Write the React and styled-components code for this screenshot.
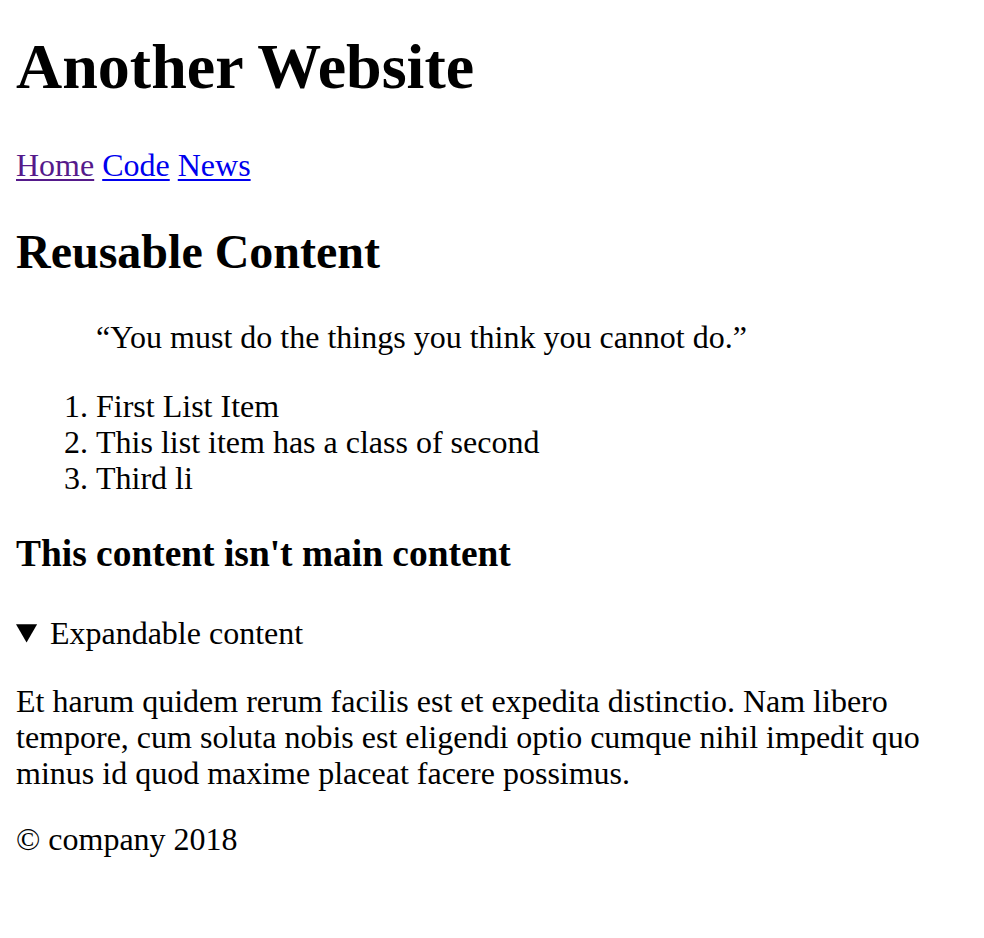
import React from 'react';
import styled, { createGlobalStyle } from 'styled-components';

const GlobalStyle = createGlobalStyle`
  body {
    margin: 0;
    background: #fff;
    color: #000;
    font-family: "Liberation Serif", "Times New Roman", serif;
    font-size: 32px;
    line-height: 36px;
  }
`;

const Page = styled.div`
  padding: 31.4px 16px 0;
`;

const Title = styled.h1`
  margin: 0 0 43.8px;
  font-size: 64px;
  line-height: 72px;
  font-weight: bold;
`;

const Nav = styled.nav`
  margin: 0;
`;

const NavLink = styled.a`
  color: ${props => (props.visited ? '#551a8b' : '#0000ee')};
  text-decoration: underline;
  text-decoration-thickness: 2px;
  text-underline-offset: 3px;
`;

const SectionTitle = styled.h2`
  margin: 41.6px 0 40.4px;
  font-size: 48px;
  line-height: 54px;
  font-weight: bold;
`;

const Quote = styled.blockquote`
  margin: 32px 0 33px 80px;
`;

const List = styled.ol`
  margin: 33px 0 32px;
  padding-left: 80px;
`;

const Item = styled.li``;

const AsideTitle = styled.h3`
  margin: 37.2px 0 39.8px;
  font-size: 37.44px;
  line-height: 42px;
  font-weight: bold;
`;

const Details = styled.details`
  margin: 0;
`;

const Summary = styled.summary`
  cursor: pointer;
`;

const Paragraph = styled.p`
  margin: 32px 0 30px;
`;

const Footer = styled.footer`
  margin: 0;
`;

const FooterText = styled.p`
  margin: 0;
`;

export default function App() {
  return (
    <>
      <GlobalStyle />
      <Page>
        <header>
          <Title>Another Website</Title>
          <Nav>
            <NavLink href="#home" visited>Home</NavLink>{' '}
            <NavLink href="#code">Code</NavLink>{' '}
            <NavLink href="#news">News</NavLink>
          </Nav>
        </header>
        <main>
          <SectionTitle>Reusable Content</SectionTitle>
          <Quote>“You must do the things you think you cannot do.”</Quote>
          <List>
            <Item>First List Item</Item>
            <Item className="second">This list item has a class of second</Item>
            <Item>Third li</Item>
          </List>
        </main>
        <aside>
          <AsideTitle>This content isn't main content</AsideTitle>
          <Details open>
            <Summary>Expandable content</Summary>
            <Paragraph>
              Et harum quidem rerum facilis est et expedita distinctio. Nam libero
              tempore, cum soluta nobis est eligendi optio cumque nihil impedit quo
              minus id quod maxime placeat facere possimus.
            </Paragraph>
          </Details>
        </aside>
        <Footer>
          <FooterText>© company 2018</FooterText>
        </Footer>
      </Page>
    </>
  );
}
